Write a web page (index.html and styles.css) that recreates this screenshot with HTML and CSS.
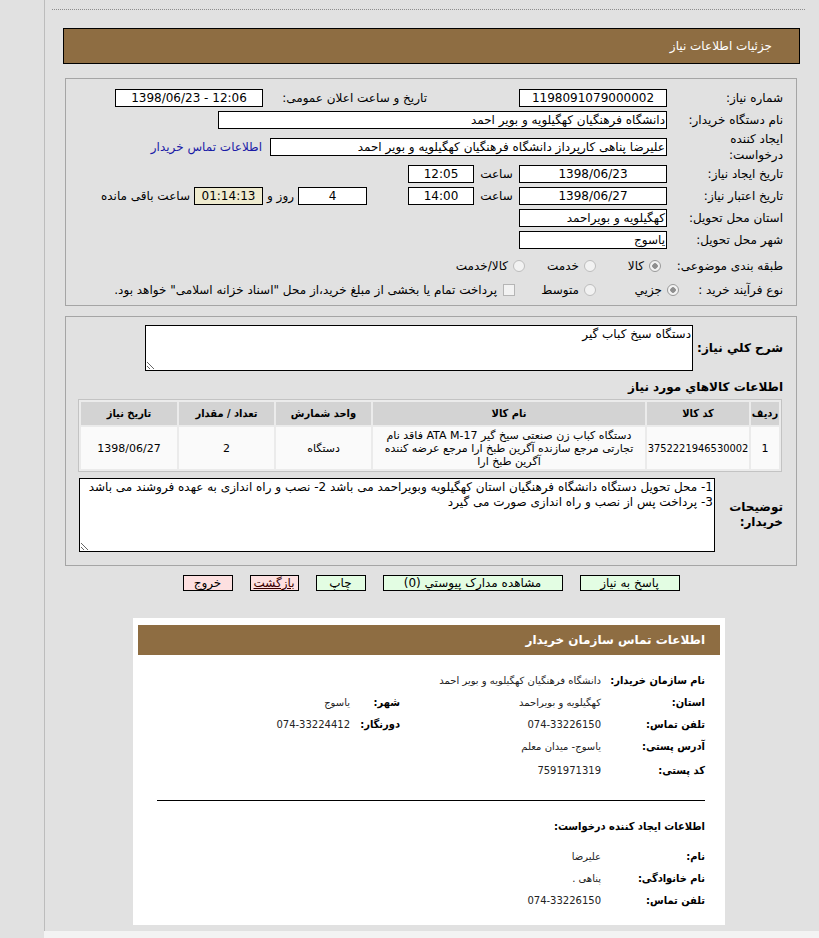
FILE: index.html
```html
<!DOCTYPE html>
<html lang="fa">
<head>
    <meta charset="UTF-8">
    <meta name="viewport" content="width=device-width, initial-scale=1.0">
    <title>جزئیات اطلاعات نیاز</title>
    <link rel="stylesheet" href="styles.css">
</head>
<body>
    <div class="gutter"></div>
    <div class="main">
        <div class="topline"></div>
        <div class="title">جزئیات اطلاعات نیاز</div>

        <div class="panel info">
            <div class="row">
                <span class="lbl">شماره نیاز:</span>
                <span class="box w148 ltr">1198091079000002</span>
                <span class="lbl2">تاریخ و ساعت اعلان عمومی:</span>
                <span class="box w148 ltr">1398/06/23 - 12:06</span>
            </div>
            <div class="row">
                <span class="lbl">نام دستگاه خریدار:</span>
                <span class="box w449">دانشگاه فرهنگیان کهگیلویه و بویر احمد</span>
            </div>
            <div class="row tall">
                <span class="lbl">ایجاد کننده<br>درخواست:</span>
                <span class="box w397">علیرضا پناهی کارپرداز دانشگاه فرهنگیان کهگیلویه و بویر احمد</span>
                <a class="buyer-link" href="#">اطلاعات تماس خریدار</a>
            </div>
            <div class="row">
                <span class="lbl">تاریخ ایجاد نیاز:</span>
                <span class="box w148 ltr">1398/06/23</span>
                <span class="word w45">ساعت</span>
                <span class="box w66 ltr">12:05</span>
            </div>
            <div class="row">
                <span class="lbl">تاریخ اعتبار نیاز:</span>
                <span class="box w148 ltr">1398/06/27</span>
                <span class="word w45">ساعت</span>
                <span class="box w66 ltr">14:00</span>
                <span class="box w69 ltr days">4</span>
                <span class="word w35">روز و</span>
                <span class="box w69 ltr remain">01:14:13</span>
                <span class="word left-note">ساعت باقی مانده</span>
            </div>
            <div class="row">
                <span class="lbl">استان محل تحویل:</span>
                <span class="box w148">کهگیلویه و بویراحمد</span>
            </div>
            <div class="row">
                <span class="lbl">شهر محل تحویل:</span>
                <span class="box w148">یاسوج</span>
            </div>
            <div class="row opts cat">
                <span class="lbl">طبقه بندی موضوعی:</span>
                <span class="opt o1"><span class="radio on"></span>کالا</span>
                <span class="opt o2"><span class="radio"></span>خدمت</span>
                <span class="opt"><span class="radio"></span>کالا/خدمت</span>
            </div>
            <div class="row opts proc">
                <span class="lbl">نوع فرآیند خرید :</span>
                <span class="opt o1"><span class="radio on"></span>جزیي</span>
                <span class="opt o2"><span class="radio"></span>متوسط</span>
                <span class="opt"><span class="check"></span>پرداخت تمام یا بخشی از مبلغ خرید،از محل "اسناد خزانه اسلامی" خواهد بود.</span>
            </div>
        </div>

        <div class="panel details">
            <div class="desc-row">
                <span class="blbl">شرح کلي نياز:</span>
                <textarea class="desc" readonly>دستگاه سیخ کباب گیر</textarea>
            </div>
            <div class="goods-title">اطلاعات کالاهاي مورد نياز</div>
            <table class="goods">
                <colgroup>
                    <col style="width: 28px">
                    <col style="width: 102px">
                    <col style="width: 272px">
                    <col style="width: 95px">
                    <col style="width: 95px">
                    <col style="width: 96px">
                </colgroup>
                <thead>
                    <tr>
                        <th>ردیف</th>
                        <th>کد کالا</th>
                        <th>نام کالا</th>
                        <th>واحد شمارش</th>
                        <th>تعداد / مقدار</th>
                        <th>تاریخ نیاز</th>
                    </tr>
                </thead>
                <tbody>
                    <tr>
                        <td>1</td>
                        <td class="code">3752221946530002</td>
                        <td>دستگاه کباب زن صنعتی سیخ گیر ATA M-17 فاقد نام تجارتی مرجع سازنده آگرین طبخ ارا مرجع عرضه کننده آگرین طبخ ارا</td>
                        <td>دستگاه</td>
                        <td>2</td>
                        <td>1398/06/27</td>
                    </tr>
                </tbody>
            </table>
            <div class="notes-row">
                <span class="blbl notes-lbl">توضیحات خریدار:</span>
                <textarea class="notes" readonly>1- محل تحویل دستگاه دانشگاه فرهنگیان استان کهگیلویه وبویراحمد می باشد 2- نصب و راه اندازی به عهده فروشند می باشد 3- پرداخت پس از نصب و راه اندازی صورت می گیرد</textarea>
            </div>
        </div>

        <div class="actions">
            <button class="btn green b100">پاسخ به نیاز</button>
            <button class="btn green b180">مشاهده مدارک پیوستي (0)</button>
            <button class="btn green b50">چاپ</button>
            <button class="btn pink b49 under">بازگشت</button>
            <button class="btn pink b50">خروج</button>
        </div>

        <div class="contact">
            <div class="contact-head">اطلاعات تماس سازمان خریدار</div>
            <div class="crow first">
                <span class="clbl">نام سازمان خریدار:</span>
                <span class="cval">دانشگاه فرهنگیان کهگیلویه و بویر احمد</span>
            </div>
            <div class="crow">
                <span class="clbl">استان:</span>
                <span class="cval w201">کهگیلویه و بویراحمد</span>
                <span class="clbl c2">شهر:</span>
                <span class="cval">یاسوج</span>
            </div>
            <div class="crow">
                <span class="clbl">تلفن تماس:</span>
                <span class="cval w201">074-33226150</span>
                <span class="clbl c2">دورنگار:</span>
                <span class="cval">074-33224412</span>
            </div>
            <div class="crow">
                <span class="clbl">آدرس پستی:</span>
                <span class="cval">یاسوج- میدان معلم</span>
            </div>
            <div class="crow last">
                <span class="clbl">کد پستی:</span>
                <span class="cval">7591971319</span>
            </div>
            <hr class="sep">
            <div class="crow sub">اطلاعات ایجاد کننده درخواست:</div>
            <div class="crow gap">
                <span class="clbl">نام:</span>
                <span class="cval">علیرضا</span>
            </div>
            <div class="crow">
                <span class="clbl">نام خانوادگی:</span>
                <span class="cval">پناهی .</span>
            </div>
            <div class="crow">
                <span class="clbl">تلفن تماس:</span>
                <span class="cval">074-33226150</span>
            </div>
        </div>
    </div>
</body>
</html>
```

FILE: styles.css
```css
html {
    background-color: #f3f3f3;
}

body {
    margin: 0;
    display: flex;
    align-items: flex-start;
    font-family: "DejaVu Sans", sans-serif;
    font-size: 12px;
    color: #000;
}

.gutter {
    width: 44px;
    height: 938px;
    flex: none;
    background-color: #e1e1e1;
}

.main {
    flex: 1;
    height: 931px;
    box-sizing: border-box;
    direction: rtl;
    background-color: #e1e1e1;
    border-left: 1px solid #bcbcbc;
    overflow: hidden;
}

.topline {
    height: 9px;
    margin: 0 14px 0 7px;
    border-bottom: 1px dotted #8c8c8c;
}

.title {
    height: 34px;
    line-height: 34px;
    margin: 18px 19px 0 18px;
    padding-right: 27px;
    background-color: #8e6d42;
    border: 1px solid #000;
    color: #fff;
    font-size: 12px;
}

/* boxed sections */
.panel {
    margin: 14px 22px 0 20px;
    padding: 8px 13px 4px 0;
    border: 1px solid #a5a5a5;
}

.details {
    margin-top: 10px;
    padding-bottom: 13px;
}

.row {
    display: flex;
    align-items: center;
    height: 22px;
    white-space: nowrap;
}

.row.tall {
    height: 32px;
}

.lbl {
    width: 116px;
    flex: none;
    line-height: 16px;
}

.box {
    flex: none;
    height: 18px;
    line-height: 16px;
    box-sizing: border-box;
    padding: 0 1px;
    border: 1px solid #000;
    background-color: #fff;
    overflow: hidden;
    white-space: nowrap;
}

.ltr {
    direction: ltr;
    text-align: center;
}

.w148 { width: 148px; }
.w449 { width: 449px; }
.w397 { width: 397px; }
.w66 { width: 66px; }
.w69 { width: 69px; }

.lbl2 {
    width: 164px;
    margin-right: 92px;
    flex: none;
}

.buyer-link {
    margin-right: 8px;
    color: #1a1aa6;
    text-decoration: none;
}

.word {
    flex: none;
    text-align: center;
}

.w45 { width: 45px; }
.w35 { width: 35px; }

.days {
    margin-right: 41px;
}

.remain {
    background-color: #efebcf;
}

.left-note {
    margin-right: 4px;
}

/* radio rows */
.opts.cat {
    margin-top: 4px;
}

.opts.proc {
    margin-top: 2px;
}

.proc .lbl {
    width: 104px;
}

.opt {
    display: flex;
    align-items: center;
    gap: 5px;
    flex: none;
}

.cat .o1 {
    width: 65px;
    padding-right: 6px;
}

.cat .o2 {
    width: 71px;
}

.proc .o1 {
    width: 83px;
}

.proc .o2 {
    width: 81px;
}

.radio {
    width: 12px;
    height: 12px;
    box-sizing: border-box;
    border-radius: 50%;
    border: 1px solid #bdbdbd;
    background-color: #f2f2f2;
}

.radio.on {
    background: radial-gradient(circle, #8f8f8f 0 2.5px, #f2f2f2 3px);
    border-color: #9a9a9a;
}

.check {
    width: 12px;
    height: 12px;
    box-sizing: border-box;
    border: 1px solid #b5b5b5;
    background-color: #f2f2f2;
    margin-left: 1px;
}

/* second section */
.desc-row,
.notes-row {
    display: flex;
    align-items: center;
}

.blbl {
    width: 90px;
    flex: none;
    font-weight: bold;
    font-size: 12px;
}

textarea {
    box-sizing: border-box;
    border: 1px solid #000;
    background-color: #fff;
    font-family: "DejaVu Sans", sans-serif;
    font-size: 12px;
    direction: rtl;
    padding: 1px 1px;
    margin: 0;
    overflow: hidden;
    line-height: 15px;
}

.desc {
    width: 548px;
    height: 46px;
}

.goods-title {
    margin-top: 7px;
    height: 18px;
    line-height: 18px;
    font-weight: bold;
}

.goods {
    width: 703px;
    margin: 3px 1px 0 0;
    table-layout: fixed;
    border: 1px solid #c3c3c3;
    border-spacing: 2px;
    background-color: #ebebeb;
    font-size: 11px;
}

.goods th {
    height: 23px;
    padding: 0;
    background-color: #d3d3d3;
    font-weight: bold;
    font-family: "DejaVu Sans Condensed", "DejaVu Sans", sans-serif;
}

.goods td {
    height: 42px;
    padding: 0 3px;
    background-color: #fafafa;
    text-align: center;
    line-height: 13px;
}

.goods td.code {
    padding: 0;
    font-family: "DejaVu Sans Condensed", "DejaVu Sans", sans-serif;
    font-size: 11px;
}

.notes-row {
    margin-top: 6px;
}

.notes-lbl {
    width: 68px;
    line-height: 15px;
}

.notes {
    width: 636px;
    height: 74px;
}

/* buttons */
.actions {
    display: flex;
    justify-content: center;
    gap: 17px;
    margin: 9px 22px 0 20px;
}

.btn {
    height: 16px;
    padding: 0;
    border: 1px solid #000;
    font-family: "DejaVu Sans", sans-serif;
    font-size: 12px;
    line-height: 14px;
    color: #000;
    cursor: pointer;
}

.green {
    background-color: #e3fde3;
}

.pink {
    background-color: #fde0e0;
}

.under {
    text-decoration: underline;
    color: #3a0000;
}

.b100 { width: 100px; }
.b180 { width: 180px; }
.b50 { width: 50px; }
.b49 { width: 49px; }

/* buyer contact card */
.contact {
    width: 592px;
    height: 307px;
    box-sizing: border-box;
    margin: 27px auto 0 88px;
    padding: 7px 5px 0;
    background-color: #fff;
}

.contact-head {
    height: 30px;
    line-height: 30px;
    padding-right: 15px;
    background-color: #8e6d42;
    color: #fff;
    font-weight: bold;
    font-size: 12px;
}

.crow {
    display: flex;
    align-items: center;
    height: 22px;
    margin-right: 15px;
    white-space: nowrap;
}

.crow.first {
    margin-top: 14px;
}

.crow.last {
    margin-top: 2px;
}

.clbl {
    width: 104px;
    flex: none;
    font-weight: bold;
    font-size: 11px;
    font-family: "DejaVu Sans Condensed", "DejaVu Sans", sans-serif;
}

.clbl.c2 {
    width: 50px;
}

.cval {
    font-size: 10px;
    color: #222;
}

.cval.w201 {
    width: 201px;
    flex: none;
}

.sep {
    margin: 19px 15px 0 19px;
    border: none;
    border-top: 1px solid #000;
}

.crow.sub {
    margin-top: 14px;
    font-weight: bold;
    font-size: 11px;
    font-family: "DejaVu Sans Condensed", "DejaVu Sans", sans-serif;
}

.crow.gap {
    margin-top: 8px;
}
```
